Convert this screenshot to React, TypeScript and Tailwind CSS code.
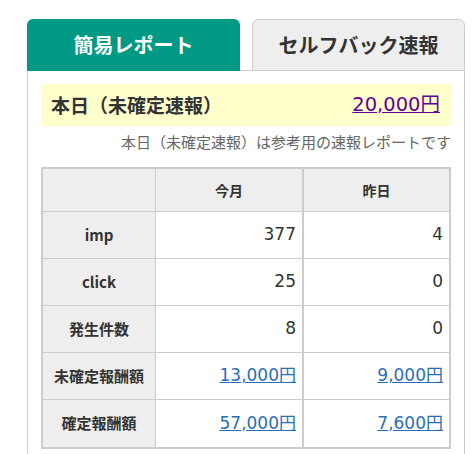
import React from 'react';

export default function App() {
  const rows = [
    { label: 'imp', month: '377', yesterday: '4' },
    { label: 'click', month: '25', yesterday: '0' },
    { label: '発生件数', month: '8', yesterday: '0' },
    { label: '未確定報酬額', month: '13,000円', yesterday: '9,000円', link: true },
    { label: '確定報酬額', month: '57,000円', yesterday: '7,600円', link: true },
  ];

  const num = { fontFamily: '"DejaVu Sans", "Noto Sans CJK JP", sans-serif' };

  return (
    <div
      className="w-[475px] h-[454px] bg-white overflow-hidden pt-[19px] pl-[27px]"
      style={{ fontFamily: '"Noto Sans CJK JP", "Noto Sans", sans-serif' }}
    >
      <div className="w-[438px]">
        {/* Tabs */}
        <div className="flex h-[52px]">
          <div className="w-[213px] bg-[#009a84] rounded-t-[6px] flex items-center justify-center text-white font-bold text-[20px]">
            簡易レポート
          </div>
          <div className="w-[12px] border-b border-[#cccccc]"></div>
          <div className="flex-1 bg-[#eeeeee] border border-[#cccccc] rounded-t-[6px] flex items-center justify-center text-[#333333] font-bold text-[20px]">
            セルフバック速報
          </div>
        </div>

        {/* Panel */}
        <div className="border-l border-r border-[#cccccc] px-[13px] pt-[13px] h-[400px]">
          <div className="h-[42px] bg-[#ffffcc] flex items-center justify-between pl-[10px] pr-[11px]">
            <span className="font-bold text-[19px] text-[#333333]">本日（未確定速報）</span>
            <a href="#" className="text-[19.5px] text-[#660099] underline" style={num}>20,000円</a>
          </div>
          <p className="text-right text-[15px] text-[#666666] mt-[5px] leading-[22px]">
            本日（未確定速報）は参考用の速報レポートです
          </p>

          <table className="mt-[14px] w-[410px] border-2 border-[#cccccc] border-separate border-spacing-0 text-[#333333]">
            <thead>
              <tr className="h-[43px] bg-[#eeeeee]">
                <th className="w-[113px] border-r border-b border-[#cccccc]"></th>
                <th className="w-[148px] border-r-2 border-b border-[#cccccc] text-[14px] font-bold">今月</th>
                <th className="border-b border-[#cccccc] text-[14px] font-bold">昨日</th>
              </tr>
            </thead>
            <tbody>
              {rows.map((r, i) => {
                const last = i === rows.length - 1;
                return (
                  <tr key={r.label} className="h-[47px]">
                    <td className={`bg-[#eeeeee] border-r border-[#cccccc] text-center text-[15px] font-bold ${last ? '' : 'border-b'}`}>
                      {r.label}
                    </td>
                    <td className={`border-r-2 border-[#cccccc] text-right pr-[6px] text-[17px] ${last ? '' : 'border-b'}`} style={num}>
                      {r.link ? <a href="#" className="text-[#2a6ebb] underline">{r.month}</a> : r.month}
                    </td>
                    <td className={`border-[#cccccc] text-right pr-[6px] text-[17px] ${last ? '' : 'border-b'}`} style={num}>
                      {r.link ? <a href="#" className="text-[#2a6ebb] underline">{r.yesterday}</a> : r.yesterday}
                    </td>
                  </tr>
                );
              })}
            </tbody>
          </table>
        </div>
      </div>
    </div>
  );
}
